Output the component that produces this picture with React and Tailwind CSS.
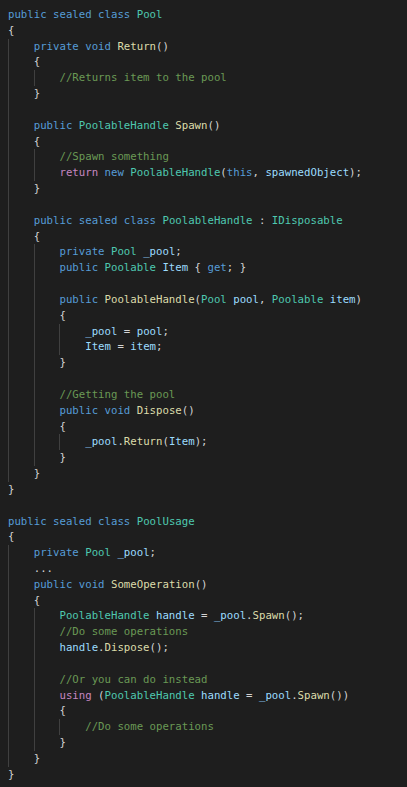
import React from "react";

const code = `public sealed class Pool
{
    private void Return()
    {
        //Returns item to the pool
    }
~1
    public PoolableHandle Spawn()
    {
        //Spawn something
        return new PoolableHandle(this, spawnedObject);
    }
~1
    public sealed class PoolableHandle : IDisposable
    {
        private Pool _pool;
        public Poolable Item { get; }
~2
        public PoolableHandle(Pool pool, Poolable item)
        {
            _pool = pool;
            Item = item;
        }
~2
        //Getting the pool
        public void Dispose()
        {
            _pool.Return(Item);
        }
    }
}
~0
public sealed class PoolUsage
{
    private Pool _pool;
    ...
    public void SomeOperation()
    {
        PoolableHandle handle = _pool.Spawn();
        //Do some operations
        handle.Dispose();
~2
        //Or you can do instead
        using (PoolableHandle handle = _pool.Spawn())
        {
            //Do some operations
        }
    }
}`;

const keywords = ["public", "sealed", "class", "private", "void", "new", "this", "get"];
const control = ["return", "using"];
const types = ["Pool", "PoolableHandle", "Poolable", "IDisposable", "PoolUsage"];

const colors = {
  keyword: "text-[#569cd6]",
  control: "text-[#c586c0]",
  type: "text-[#4ec9b0]",
  func: "text-[#dcdcaa]",
  variable: "text-[#9cdcfe]",
  comment: "text-[#6a9955]",
  punct: "text-[#d4d4d4]",
};

// split a line of C# into coloured pieces
function tokenize(text) {
  if (text.startsWith("//")) return [["comment", text]];
  const out = [];
  const re = /[A-Za-z_][A-Za-z0-9_]*|[^A-Za-z_]+/g;
  let m;
  let prevWord = "";
  while ((m = re.exec(text))) {
    const word = m[0];
    if (!/^[A-Za-z_]/.test(word)) {
      out.push(["punct", word]);
      continue;
    }
    const next = text[re.lastIndex];
    let kind = "variable";
    if (keywords.includes(word)) kind = "keyword";
    else if (control.includes(word)) kind = "control";
    else if (next === "(" && prevWord !== "new") kind = "func";
    else if (types.includes(word)) kind = "type";
    out.push([kind, word]);
    prevWord = word;
  }
  return out;
}

const lines = code.split("\n").map((raw) => {
  if (raw.startsWith("~")) return { guides: Number(raw.slice(1)), tokens: [] };
  const indent = raw.length - raw.trimStart().length;
  return { guides: indent / 4, tokens: tokenize(raw.trimStart()) };
});

export default function App() {
  return (
    <div className="min-h-screen bg-[#1e1e1e] pt-[7px] pl-[8px] font-['DejaVu_Sans_Mono','Liberation_Mono',monospace] text-[10.7px] leading-[15.83px] text-[#d4d4d4]">
      {lines.map((line, i) => (
        <div key={i} className="flex h-[15.83px] whitespace-pre">
          {Array.from({ length: line.guides }).map((_, g) => (
            <span key={g} className="w-[4ch] shrink-0 self-stretch border-l border-[#404040]" />
          ))}
          <span>
            {line.tokens.map(([kind, text], t) => (
              <span key={t} className={colors[kind]}>
                {text}
              </span>
            ))}
          </span>
        </div>
      ))}
    </div>
  );
}
